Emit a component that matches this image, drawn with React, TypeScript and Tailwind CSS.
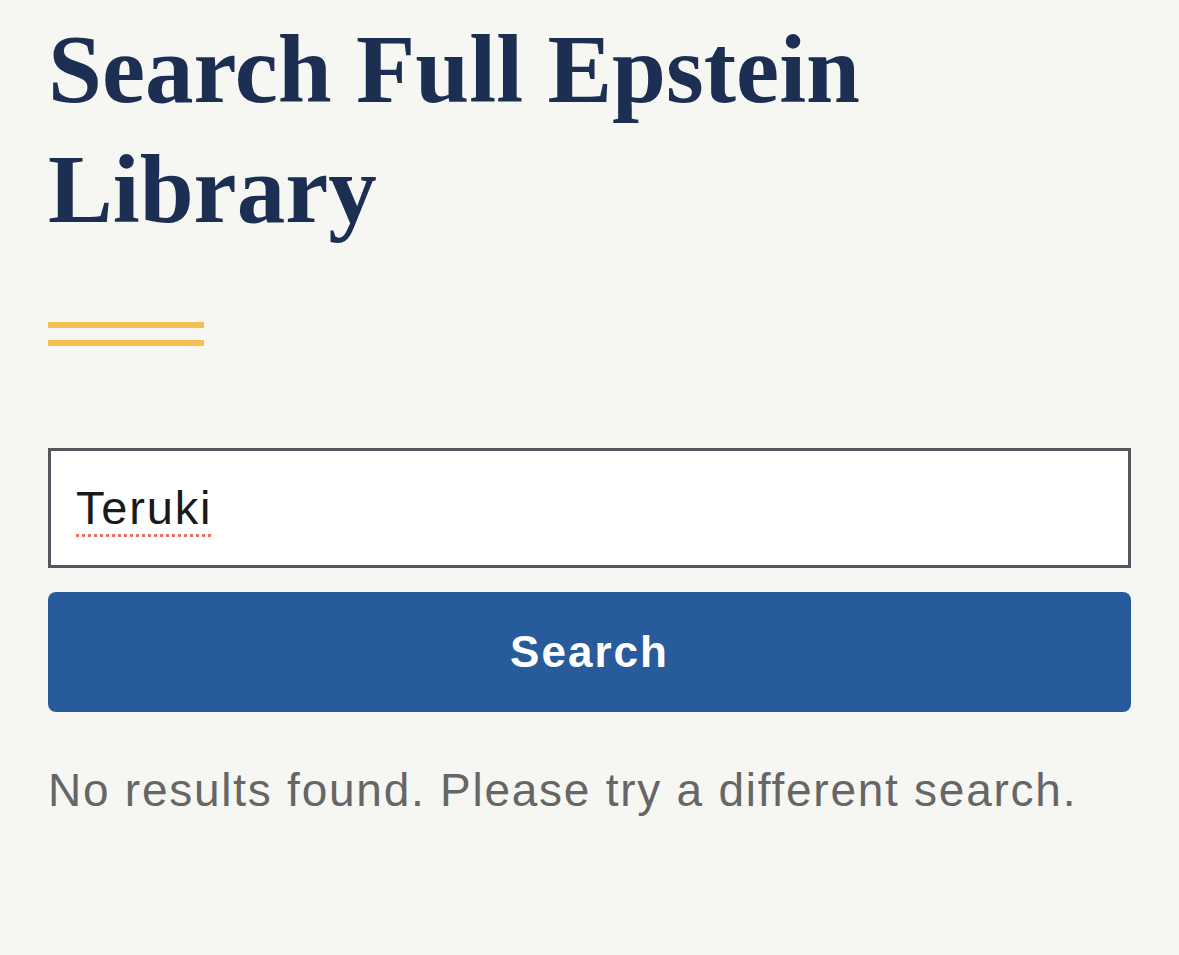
import React from 'react';

export default function App() {
  return (
    <div className="min-h-[955px] w-full bg-[#f6f6f3] px-[48px] pt-[10px]">
      {/* Heading */}
      <h1 className="text-[97px] leading-[120px] font-bold text-[#1c2e52] [font-family:'Liberation_Serif',serif]">
        Search Full Epstein
        <br />
        Library
      </h1>

      {/* Gold double rule */}
      <div className="mt-[72px] flex w-[156px] flex-col gap-[12px]">
        <div className="h-[6px] bg-[#f6c050]" />
        <div className="h-[6px] bg-[#f6c050]" />
      </div>

      {/* Search form */}
      <div className="mt-[102px] flex flex-col gap-[24px]">
        <div className="flex h-[120px] items-center border-[3px] border-[#55575f] bg-white pl-[25px]">
          <span className="text-[47px] tracking-[1.8px] text-[#1a1a1a] underline decoration-dotted decoration-[#e57368] decoration-[3px] underline-offset-[10px] [font-family:'Liberation_Sans',sans-serif]">
            Teruki
          </span>
        </div>
        <button className="flex h-[120px] items-center justify-center rounded-[8px] bg-[#285b9b] text-[44px] tracking-[2px] font-bold text-white [font-family:'Liberation_Sans',sans-serif]">
          Search
        </button>
      </div>

      <p className="mt-[44px] text-[46px] tracking-[1.75px] text-[#666666] [font-family:'Liberation_Sans',sans-serif]">
        No results found. Please try a different search.
      </p>
    </div>
  );
}
